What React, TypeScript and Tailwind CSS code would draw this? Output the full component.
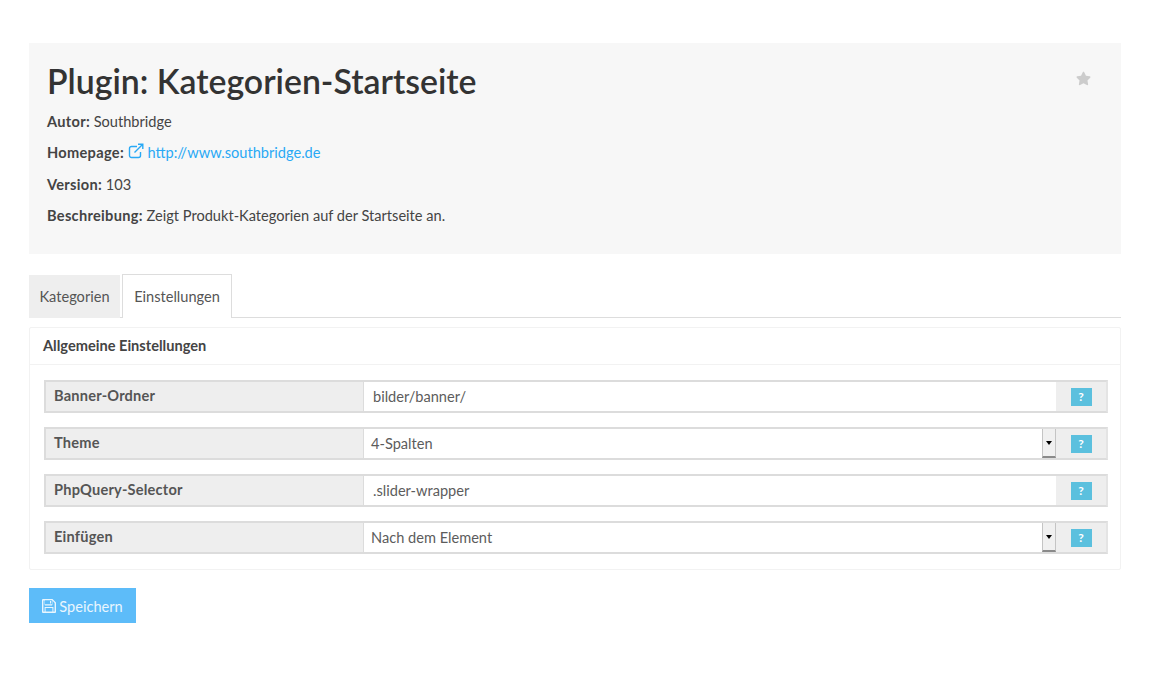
import React from 'react';
import { FaStar } from 'react-icons/fa';

type Row = { label: string; value: string; select?: boolean };

const ROWS: Row[] = [
  { label: 'Banner-Ordner', value: 'bilder/banner/' },
  { label: 'Theme', value: '4-Spalten', select: true },
  { label: 'PhpQuery-Selector', value: '.slider-wrapper' },
  { label: 'Einfügen', value: 'Nach dem Element', select: true },
];

const SettingRow: React.FC<{ row: Row }> = ({ row }) => (
  <div className="flex h-[33px] border-2 border-[#dcdcdc] border-r-[#e4e4e4]">
    <div className="flex w-[317px] shrink-0 items-center bg-[#eeeeee] pb-[2px] pl-[8px] font-bold tracking-[0.2px] text-[#555555]">{row.label}</div>
    <div className={`flex min-w-0 flex-1 items-center justify-between border-l border-[#dcdcdc] bg-white text-[#5c5c5c] ${row.select ? 'pl-[7px]' : 'pl-[9px]'}`}>
      <span>{row.value}</span>
      {row.select && (
        <span className="flex h-full w-[14px] items-center justify-center border-x border-b-2 border-[#c4c4c4] border-b-[#8a8a8a] bg-[#f0f0f0]">
          <span className="h-0 w-0 border-x-[3px] border-t-[4px] border-x-transparent border-t-black" />
        </span>
      )}
    </div>
    <div className="flex w-[50px] shrink-0 items-center justify-center bg-[#eeeeee]">
      <span className="flex h-[18px] w-[21px] items-center justify-center bg-[#5bc0de] text-[12px] font-bold text-white">?</span>
    </div>
  </div>
);

export default function App() {
  return (
    <div className="min-h-[674px] bg-white px-[29px] pt-[43px] font-['Lato','Noto_Sans',sans-serif] text-[14.6px] text-[#444444]">
      <section className="relative h-[211px] bg-[#f7f7f7] pl-[18px] pt-[16px]">
        <h1 className="text-[33.8px] font-semibold leading-[44px] text-[#333333]">Plugin: Kategorien-Startseite</h1>
        <FaStar className="absolute right-[30px] top-[28px] text-[15px] text-[#cccccc]" />
        <p className="mt-[8.5px] leading-[20px]"><b className="tracking-[0.3px]">Autor:</b> Southbridge</p>
        <p className="mt-[11.5px] leading-[20px]">
          <b className="tracking-[0.3px]">Homepage:</b>{' '}
          <a className="text-[#29a9f5]">
            {/* font-awesome style external-link, not in the icon packs */}
            <svg viewBox="0 0 16 16" className="inline h-[16px] w-[16px] align-[-1px]" fill="none" stroke="currentColor" strokeWidth="1.4">
              <path d="M12.5 9v3.5a2 2 0 0 1-2 2h-7a2 2 0 0 1-2-2v-7a2 2 0 0 1 2-2H9" />
              <path d="M6.5 9.5 14.5 1.5M10 1.2h4.8V6" />
            </svg>{' '}
            http://www.southbridge.de
          </a>
        </p>
        <p className="mt-[11.5px] leading-[20px]"><b className="tracking-[0.3px]">Version:</b> 103</p>
        <p className="mt-[11.5px] leading-[20px]"><b className="tracking-[0.3px]">Beschreibung:</b> Zeigt Produkt-Kategorien auf der Startseite an.</p>
      </section>

      <nav className="mt-[20px] flex h-[44px] border-b border-[#dddddd]">
        <div className="mt-[1px] flex h-[43px] w-[91px] items-center justify-center bg-[#eeeeee] text-[#555555]">Kategorien</div>
        <div className="ml-[2px] flex h-[44px] w-[110px] items-center justify-center border border-b-0 border-[#dddddd] bg-white text-[#555555]">Einstellungen</div>
      </nav>

      <section className="mt-[9px] h-[243px] rounded-[2px] border border-[#f2f2f2]">
        <h2 className="flex h-[37px] items-center border-b border-[#f2f2f2] pl-[13px] font-bold text-[#444444]">Allgemeine Einstellungen</h2>
        <div className="flex flex-col gap-[14px] pl-[14px] pr-[12px] pt-[15px]">
          {ROWS.map((row) => (
            <SettingRow key={row.label} row={row} />
          ))}
        </div>
      </section>

      <button
        type="button"
        className="mt-[18px] flex h-[35px] w-[107px] items-center justify-center gap-[3px] bg-[#5dbcf9] pt-[2px] text-[#e9f6fe]"
      >
        {/* old font-awesome floppy-o */}
        <svg viewBox="0 0 14 14" className="mb-[2px] h-[14px] w-[14px]" fill="currentColor" fillRule="evenodd">
          <path d="M1 0h9.5L14 3.5V13a1 1 0 0 1-1 1H1a1 1 0 0 1-1-1V1a1 1 0 0 1 1-1ZM3 1.3v4h7v-4ZM8 1.9h1.2v2.6H8ZM1.4 1.4v11.2h1.2V8h8.8v4.6h1.2V4L10.4 1.4v4.4a.6.6 0 0 1-.6.6H3.2a.6.6 0 0 1-.6-.6V1.4ZM3.6 9v3.6h6.8V9Z" />
        </svg>
        Speichern
      </button>
    </div>
  );
}
